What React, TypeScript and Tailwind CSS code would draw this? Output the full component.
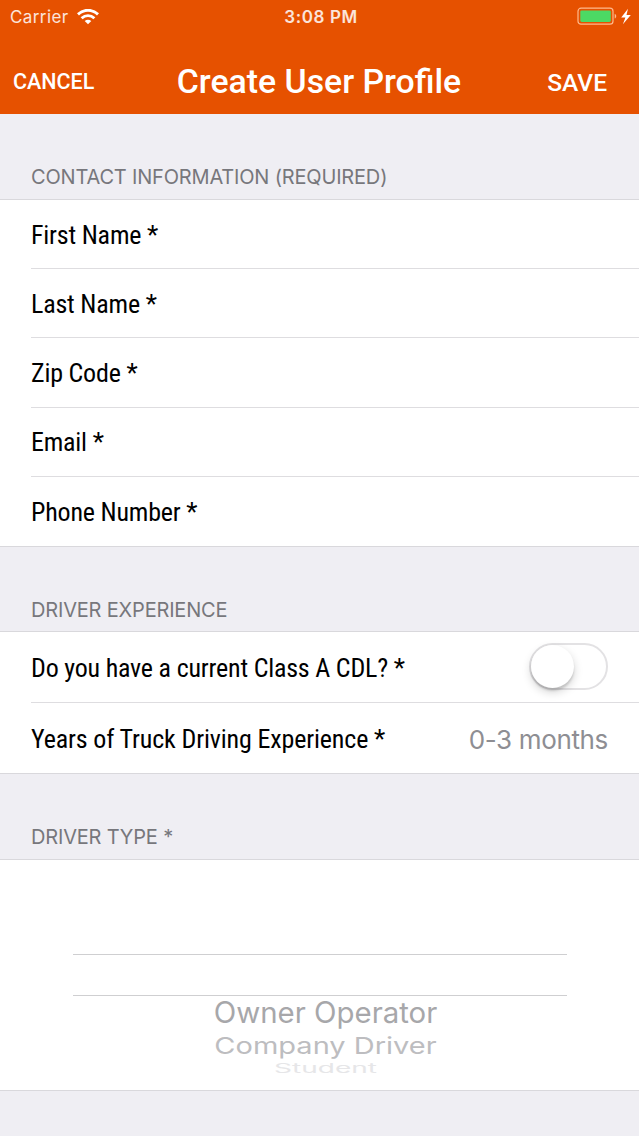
import { useState } from "react";
import clsx from "clsx";

const contactFields = ["First Name *", "Last Name *", "Zip Code *", "Email *", "Phone Number *"];

function StatusBar() {
    return (
        <div className="h-[34px] grid grid-cols-3 items-center pl-[10px] pr-[8px] text-white/85">
            <div className="flex items-center gap-2">
                <span className="text-[17px] leading-none tracking-[0.4px]">Carrier</span>
                <svg width="22" height="16" viewBox="0 0 22 16" fill="none" stroke="white" strokeWidth="2.9">
                    <path d="M1 5.4C6.8-.1 15.2-.1 21 5.4" />
                    <path d="M4.6 9.2c3.8-3.5 9-3.5 12.8 0" />
                    <path d="M11 15.2 7.7 12c2-1.7 4.6-1.7 6.6 0z" fill="white" stroke="none" />
                </svg>
            </div>
            <span className="text-center text-[17px] leading-none font-semibold tracking-[0.6px] pl-px">3:08 PM</span>
            <div className="flex items-center justify-end">
                <svg width="56" height="20" viewBox="0 0 56 20" fill="none">
                    <rect x="3" y="1.2" width="35" height="16" rx="3" stroke="#ffb98c" strokeWidth="1.2" />
                    <rect x="5.3" y="3.4" width="30.5" height="11.6" rx="1.4" fill="#4cd964" />
                    <path d="M39.7 6.8c2 .8 2 4 0 4.8z" fill="#ffb98c" />
                    <path d="m53 1.8-6.8 8.6h4.2l-2.5 6.8 7.9-9.2h-4.3z" fill="white" />
                </svg>
            </div>
        </div>
    );
}

function SectionTitle({ children, className }: { children: string; className: string }) {
    return (
        <h2 className={clsx("pl-[31px] flex items-end text-[20px] leading-6 tracking-[-0.18px] text-[#77777c]", className)}>
            {children}
        </h2>
    );
}

function Label({ children, className = "pt-px tracking-[-0.2px]" }: { children: string; className?: string }) {
    return (
        <span className={clsx("font-['Roboto_Condensed',Roboto,sans-serif] text-[26px] leading-8 text-black", className)}>
            {children}
        </span>
    );
}

function Toggle({ checked, onChange }: { checked: boolean; onChange: (value: boolean) => void }) {
    return (
        <button
            type="button"
            role="switch"
            aria-checked={checked}
            aria-label="Class A CDL"
            onClick={() => onChange(!checked)}
            className={clsx(
                "w-[79px] h-[47px] rounded-full border-2 border-[#e3e2e4] flex items-start",
                checked ? "justify-end bg-[#4cd964]" : "bg-white"
            )}
        >
            <span className="size-[43px] rounded-full bg-white shadow-[0_3px_2px_rgba(0,0,0,0.12),0_4px_10px_rgba(0,0,0,0.18)]" />
        </button>
    );
}

export default function App() {
    const [hasCdl, setHasCdl] = useState(false);

    return (
        <div className="w-[639px] h-[1136px] overflow-hidden bg-[#efeef3] font-[Inter,sans-serif]">
            <header className="h-[114px] bg-[#e65100] text-white">
                <StatusBar />
                <div className="h-20 flex items-center justify-between pl-[13px] pr-[32px] pt-4 font-[Roboto,sans-serif] font-medium">
                    <button type="button" className="w-[128px] text-left text-[21.5px] leading-8">CANCEL</button>
                    <h1 className="text-[33.8px] leading-8 whitespace-nowrap">Create User Profile</h1>
                    <button type="button" className="w-[110px] pt-px text-right text-[24.5px] leading-8">SAVE</button>
                </div>
            </header>

            <SectionTitle className="h-[85px] pb-[10px]">CONTACT INFORMATION (REQUIRED)</SectionTitle>
            <ul className="h-[348px] pl-[31px] bg-white border-y border-[#d9d8dc] grid grid-rows-5">
                {contactFields.map((field) => (
                    <li key={field} className="flex items-center border-b border-[#dedde0] last:border-b-0">
                        <Label>{field}</Label>
                    </li>
                ))}
            </ul>

            <SectionTitle className="h-[84px] pb-[9px]">DRIVER EXPERIENCE</SectionTitle>
            <div className="h-[143px] pl-[31px] bg-white border-y border-[#d9d8dc] grid grid-rows-2">
                <div className="flex items-center justify-between pr-[31px] border-b border-[#dedde0]">
                    <Label className="pt-[3px] tracking-[-0.2px]">Do you have a current Class A CDL? *</Label>
                    <Toggle checked={hasCdl} onChange={setHasCdl} />
                </div>
                <div className="flex items-center justify-between pr-[31px]">
                    <Label className="pt-[3px] tracking-[-0.15px]">Years of Truck Driving Experience *</Label>
                    <span className="pt-[5px] text-[26px] leading-8 tracking-[-0.35px] text-[#8e8e93]">0-3 months</span>
                </div>
            </div>

            <SectionTitle className="h-[85px] pb-[10px]">DRIVER TYPE *</SectionTitle>
            <div className="h-[232px] bg-white border-y border-[#d9d8dc] flex flex-col items-center pt-[94px]">
                <div className="w-[494px] h-[42px] border-y border-[#cfcfd1] shrink-0" />
                <div className="h-[33px] pl-3 flex items-center text-[29.4px] text-[#a7a7aa] leading-none">
                    <span>Owner Operator</span>
                </div>
                <div className="h-8 pl-3 flex items-center text-[29px] text-[#bdbdc0] leading-none">
                    <span className="scale-y-[0.8]">Company Driver</span>
                </div>
                <div className="h-[13px] pl-3 flex items-center text-[28px] text-[#e6e6e8] leading-none">
                    <span className="scale-y-[0.46]">Student</span>
                </div>
            </div>
        </div>
    );
}
